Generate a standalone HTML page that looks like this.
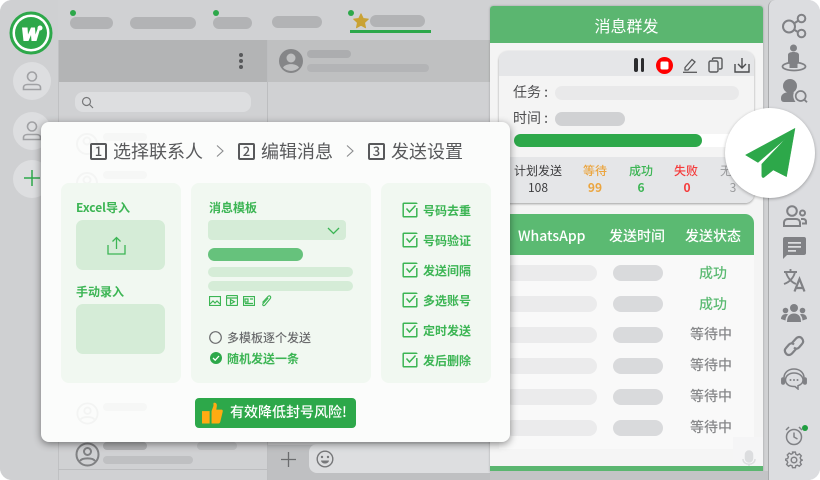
<!DOCTYPE html>
<html lang="zh">
<head>
<meta charset="utf-8">
<style>
html,body{margin:0;padding:0;background:#fff}
#p{position:relative;width:820px;height:480px;overflow:hidden;background:#d0d1d3;border-radius:12px;font-family:"Noto Sans CJK SC","Liberation Sans",sans-serif}
#p div,#p span,#p svg{position:absolute}
.t{white-space:nowrap;line-height:1}
.pill{border-radius:20px}
.b{font-weight:500}
.g{font-size:12px;color:#3cb554;font-weight:700}
.n{width:13px;height:13px;border:2px solid #58595b;border-radius:2px}
.d{width:17px;text-align:center;font-size:13px;color:#58595b;font-weight:500}
</style>
</head>
<body>
<div id="p">
<!-- left rail -->
<div style="left:0;top:0;width:58px;height:480px;background:#cfd0d2"></div>
<svg style="left:9px;top:11px" width="45" height="45" viewBox="0 0 45 45">
<circle cx="22" cy="22" r="20" fill="#fff" stroke="#2da84a" stroke-width="3"/>
<circle cx="22" cy="22" r="16" fill="#2da84a"/>
<path d="M13 16.500h5.500l.5 7 3-7h4l.5 7 2.500-7h2.500l-4 13.500h-5l-.5-6-2.500 6h-5z" fill="#fff"/>
<circle cx="31" cy="17" r="2.500" fill="#fff"/>
</svg>
<div style="left:13px;top:62px;width:38px;height:38px;border-radius:50%;background:#dddee0"></div>
<div style="left:13px;top:112px;width:38px;height:38px;border-radius:50%;background:#dddee0"></div>
<div style="left:13px;top:160px;width:38px;height:38px;border-radius:50%;background:#dddee0"></div>
<svg style="left:22px;top:71px" width="20" height="20" viewBox="0 0 20 20" fill="none" stroke="#a0a1a4" stroke-width="1.600"><circle cx="10" cy="5.500" r="4.500"/><path d="M1.500 18.500v-2c0-2 2-3 4-3h9c2 0 4 1 4 3v2z"/></svg>
<svg style="left:22px;top:121px" width="20" height="20" viewBox="0 0 20 20" fill="none" stroke="#a0a1a4" stroke-width="1.600"><circle cx="10" cy="5.500" r="4.500"/><path d="M1.500 18.500v-2c0-2 2-3 4-3h9c2 0 4 1 4 3v2z"/></svg>
<svg style="left:24px;top:170px" width="16" height="16" viewBox="0 0 16 16" stroke="#2da84a" stroke-width="1.500"><path d="M8 0v16M0 8h16"/></svg>

<!-- tabs -->
<div style="left:70px;top:10px;width:6px;height:6px;border-radius:50%;background:#2da84a"></div>
<div class="pill" style="left:70px;top:17px;width:43px;height:12px;background:#b2b3b5"></div>
<div class="pill" style="left:130px;top:17px;width:66px;height:12px;background:#b2b3b5"></div>
<div style="left:213px;top:10px;width:6px;height:6px;border-radius:50%;background:#2da84a"></div>
<div class="pill" style="left:213px;top:17px;width:39px;height:12px;background:#b2b3b5"></div>
<div class="pill" style="left:272px;top:16px;width:50px;height:12px;background:#b2b3b5"></div>
<div style="left:348px;top:10px;width:6px;height:6px;border-radius:50%;background:#2da84a"></div>
<svg style="left:353px;top:13px" width="16" height="16" viewBox="0 0 16 16"><path d="M8 .8l2.200 4.700 5.100.6-3.800 3.500 1 5.100L8 12.200l-4.500 2.500 1-5.100L.7 6.100l5.100-.6z" fill="#c9a234" stroke="#c9a234" stroke-linejoin="round"/></svg>
<div class="pill" style="left:370px;top:15px;width:55px;height:12px;background:#b2b3b5"></div>
<div style="left:350px;top:30px;width:81px;height:3px;background:#2da84a"></div>

<!-- chat list -->
<div style="left:58px;top:40px;width:210px;height:42px;background:#b3b4b5"></div>
<div style="left:239px;top:53px;width:4px;height:4px;border-radius:50%;background:#58595b"></div>
<div style="left:239px;top:59px;width:4px;height:4px;border-radius:50%;background:#58595b"></div>
<div style="left:239px;top:65px;width:4px;height:4px;border-radius:50%;background:#58595b"></div>
<div style="left:75px;top:92px;width:176px;height:20px;border-radius:8px;background:#dddee0"></div>
<svg style="left:81px;top:96px" width="13" height="13" viewBox="0 0 13 13" fill="none" stroke="#77787a" stroke-width="1.200"><circle cx="5.500" cy="5.500" r="4"/><path d="M8.500 8.500l3.500 3.500"/></svg>
<div style="left:267px;top:40px;width:1px;height:440px;background:#bdbec0"></div>
<div style="left:58px;top:40px;width:1px;height:440px;background:#c0c1c3"></div>
<svg style="left:75px;top:442px" width="25" height="25" viewBox="0 0 25 25" fill="none" stroke="#808183" stroke-width="2"><circle cx="12.500" cy="12.500" r="11"/><circle cx="12.500" cy="9.500" r="3.500"/><path d="M5 19c2-3.500 13-3.500 15 0"/></svg>
<div class="pill" style="left:103px;top:442px;width:44px;height:8px;background:#aeafb1"></div>
<div class="pill" style="left:197px;top:442px;width:40px;height:8px;background:#bfc0c2"></div>
<div class="pill" style="left:103px;top:456px;width:90px;height:8px;background:#bfc0c2"></div>
<div style="left:58px;top:469px;width:210px;height:1px;background:#bdbec0"></div>

<!-- chat area -->
<div style="left:268px;top:40px;width:222px;height:42px;background:#bfc0c1"></div>
<svg style="left:279px;top:49px" width="24" height="24" viewBox="0 0 24 24"><circle cx="12" cy="12" r="12" fill="#858688"/><circle cx="12" cy="9" r="4.500" fill="#bfc0c1"/><path d="M4 18.500c2.500-4.500 13.500-4.500 16 0-4 4.500-12 4.500-16 0z" fill="#bfc0c1"/></svg>
<div class="pill" style="left:307px;top:50px;width:44px;height:8px;background:#acadaf"></div>
<div class="pill" style="left:307px;top:64px;width:122px;height:8px;background:#b3b4b6"></div>
<div style="left:268px;top:445px;width:222px;height:35px;background:#bfc0c2"></div>
<svg style="left:281px;top:452px" width="15" height="15" viewBox="0 0 15 15" stroke="#6b6c6e" stroke-width="1.300"><path d="M7.500 0v15M0 7.500h15"/></svg>
<div style="left:309px;top:444px;width:190px;height:29px;border-radius:8px;background:#dddee0"></div>
<svg style="left:316px;top:450px" width="18" height="18" viewBox="0 0 18 18" fill="none" stroke="#77787a" stroke-width="1.400"><circle cx="9" cy="9" r="7.800"/><circle cx="6" cy="7" r="1.200" fill="#77787a" stroke="none"/><circle cx="12" cy="7" r="1.200" fill="#77787a" stroke="none"/><path d="M5 10.500h8c-.5 4-7.500 4-8 0z" fill="#77787a" stroke="none"/></svg>

<!-- mass send panel -->
<div style="left:490px;top:6px;width:273px;height:466px;background:#f4f4f4;box-shadow:0 0 2px rgba(0,0,0,.25);border-radius:3px 3px 0 0"></div>
<div style="left:490px;top:6px;width:273px;height:37px;background:#5bb670;border-radius:3px 3px 0 0"></div>
<div class="t" style="left:490px;top:17px;width:273px;text-align:center;color:#fff;font-size:16px">消息群发</div>

<div style="left:499px;top:51px;width:255px;height:152px;background:#f4f4f4;border-radius:9px;box-shadow:0 1px 2px rgba(0,0,0,.35);overflow:hidden"></div>
<div style="left:499px;top:51px;width:255px;height:25px;background:#e5e6e8;border-radius:9px 9px 0 0"></div>
<div style="left:634px;top:58px;width:3.500px;height:14px;border-radius:2px;background:#2c2c2e"></div>
<div style="left:640.500px;top:58px;width:3.500px;height:14px;border-radius:2px;background:#2c2c2e"></div>
<svg style="left:656px;top:57px" width="17" height="17" viewBox="0 0 17 17"><circle cx="8.500" cy="8.500" r="8.500" fill="#ff0000"/><rect x="4.500" y="4.500" width="8" height="8" rx="1.500" fill="#fff"/></svg>
<svg style="left:682px;top:57px" width="16" height="16" viewBox="0 0 16 16" fill="none" stroke="#58595b" stroke-width="1.300"><path d="M3 10.500L10 2.500l3 2.500-7 8H3z"/><path d="M1 15.300h14"/></svg>
<svg style="left:708px;top:57px" width="15" height="16" viewBox="0 0 15 16" fill="none" stroke="#58595b" stroke-width="1.400"><rect x="1" y="4" width="9" height="11" rx="1.500"/><path d="M4.500 3V2.200C4.500 1.500 5 1 5.700 1h6.800c.8 0 1.500.7 1.500 1.500v8c0 .8-.5 1.500-1.500 1.500H11"/></svg>
<svg style="left:734px;top:57px" width="16" height="16" viewBox="0 0 16 16" fill="none" stroke="#4b4c4e" stroke-width="1.400"><path d="M8 1v10M4 7l4 4 4-4"/><path d="M1 7v8h14V7"/></svg>

<div class="t" style="left:513px;top:85px;font-size:14px;color:#4d4d4f">任务 :</div>
<div class="pill" style="left:555px;top:86px;width:184px;height:14px;background:#e9e9ea"></div>
<div class="t" style="left:513px;top:111px;font-size:14px;color:#4d4d4f">时间 :</div>
<div class="pill" style="left:555px;top:112px;width:70px;height:14px;background:#d0d1d3"></div>
<div class="pill" style="left:514px;top:134px;width:225px;height:13px;background:#fff"></div>
<div class="pill" style="left:514px;top:134px;width:188px;height:13px;background:#2da84a"></div>

<div style="left:499px;top:157px;width:255px;height:46px;background:#e5e6e8;border-radius:0 0 9px 9px"></div>
<div class="t" style="left:514px;top:165px;font-size:12px;color:#3c3c3e">计划发送</div>
<div class="t" style="left:514px;top:182px;width:48px;text-align:center;font-size:12px;color:#3c3c3e">108</div>
<div class="t b" style="left:583px;top:165px;font-size:12px;color:#eba53f">等待</div>
<div class="t" style="left:583px;top:182px;width:24px;text-align:center;font-size:12px;font-weight:700;color:#eba53f">99</div>
<div class="t b" style="left:629px;top:165px;font-size:12px;color:#3cb554">成功</div>
<div class="t" style="left:629px;top:182px;width:24px;text-align:center;font-size:12px;font-weight:700;color:#3cb554">6</div>
<div class="t b" style="left:674px;top:165px;font-size:12px;color:#f53b3b">失败</div>
<div class="t" style="left:675px;top:182px;width:24px;text-align:center;font-size:12px;font-weight:700;color:#f53b3b">0</div>
<div class="t" style="left:720px;top:165px;font-size:12px;color:#9a9b9d">无</div>
<div class="t" style="left:721px;top:182px;width:24px;text-align:center;font-size:12px;color:#9a9b9d">3</div>

<div style="left:499px;top:214px;width:255px;height:235px;background:#f9f9f9;border-radius:9px 9px 0 0"></div>
<div style="left:499px;top:214px;width:255px;height:41px;background:#5bba72;border-radius:9px 9px 0 0"></div>
<div class="t b" style="left:518px;top:229px;font-size:14px;color:#fff">WhatsApp</div>
<div class="t b" style="left:609px;top:229px;font-size:14px;color:#fff">发送时间</div>
<div class="t b" style="left:685px;top:229px;font-size:14px;color:#fff">发送状态</div>

<div class="pill" style="left:505px;top:265px;width:92px;height:16px;background:#ebebec"></div>
<div class="pill" style="left:613px;top:265px;width:50px;height:16px;background:#d9dadc"></div>
<div class="t b" style="left:699px;top:266px;font-size:14px;color:#5bba72">成功</div>
<div class="pill" style="left:505px;top:296px;width:92px;height:16px;background:#ebebec"></div>
<div class="pill" style="left:613px;top:296px;width:50px;height:16px;background:#d9dadc"></div>
<div class="t b" style="left:699px;top:297px;font-size:14px;color:#5bba72">成功</div>
<div class="pill" style="left:505px;top:327px;width:92px;height:16px;background:#ebebec"></div>
<div class="pill" style="left:613px;top:327px;width:50px;height:16px;background:#d9dadc"></div>
<div class="t b" style="left:690px;top:327px;font-size:14px;color:#87888a">等待中</div>
<div class="pill" style="left:505px;top:358px;width:92px;height:16px;background:#ebebec"></div>
<div class="pill" style="left:613px;top:358px;width:50px;height:16px;background:#d9dadc"></div>
<div class="t b" style="left:690px;top:358px;font-size:14px;color:#87888a">等待中</div>
<div class="pill" style="left:505px;top:389px;width:92px;height:16px;background:#ebebec"></div>
<div class="pill" style="left:613px;top:389px;width:50px;height:16px;background:#d9dadc"></div>
<div class="t b" style="left:690px;top:389px;font-size:14px;color:#87888a">等待中</div>
<div class="pill" style="left:505px;top:420px;width:92px;height:16px;background:#ebebec"></div>
<div class="pill" style="left:613px;top:420px;width:50px;height:16px;background:#d9dadc"></div>
<div class="t b" style="left:690px;top:420px;font-size:14px;color:#87888a">等待中</div>

<div style="left:490px;top:449px;width:273px;height:17px;background:#f5f5f5"></div>
<div style="left:733px;top:437px;width:30px;height:29px;background:#f5f5f6"></div>
<svg style="left:741px;top:450px" width="16" height="20" viewBox="0 0 16 20" fill="none" stroke="#dcdddf" stroke-width="1.500"><rect x="4.500" y="1" width="7" height="11" rx="3.500" fill="#dcdddf"/><path d="M2 9c0 7 12 7 12 0M8 14v5"/></svg>
<div style="left:490px;top:466px;width:273px;height:5px;background:#5bb670"></div>
<div style="left:490px;top:471px;width:279px;height:9px;background:#c3c4c6"></div>

<!-- right rail -->
<div style="left:768px;top:0;width:52px;height:480px;background:#dcdde0;border-left:1px solid #a9aaac;border-radius:7px 0 0 0;box-sizing:border-box"></div>
<svg style="left:781px;top:13px" width="26" height="26" viewBox="0 0 26 26" fill="none" stroke="#808185" stroke-width="2"><circle cx="8" cy="13.500" r="6"/><circle cx="20.500" cy="5.500" r="3.800"/><circle cx="20.500" cy="20.500" r="3.800"/><path d="M13 10.500l4.500-3M13 16.500l4.500 3"/></svg>
<svg style="left:781px;top:44px" width="26" height="28" viewBox="0 0 26 28"><circle cx="12.500" cy="4" r="3.500" fill="#808185"/><path d="M7 11c0-2 2-3 5.500-3s5.500 1 5.500 3v8l-1.500 1v4h-8v-4L7 19z" fill="#808185"/><ellipse cx="13" cy="22.500" rx="11.500" ry="4" fill="none" stroke="#808185" stroke-width="1.800"/></svg>
<svg style="left:781px;top:78px" width="28" height="26" viewBox="0 0 28 26"><circle cx="9" cy="8" r="7" fill="#808185"/><path d="M0 20c0-4 4-6 9-6 2 0 3 .2 4 .5-1.500 3-.5 6.500 1.500 9.500H3c-2 0-3-1.500-3-3z" fill="#808185"/><circle cx="19.700" cy="18" r="5" fill="none" stroke="#808185" stroke-width="1.700"/><path d="M23.300 21.600l2.700 2.700" stroke="#808185" stroke-width="1.800"/></svg>
<svg style="left:783px;top:205px" width="24" height="22" viewBox="0 0 24 22" fill="none" stroke="#808185" stroke-width="2"><circle cx="9" cy="6" r="4.800"/><circle cx="19.500" cy="8" r="2.500"/><path d="M1 21v-3c0-3 2-4 4-4h8c2 0 4 1 4 4v3z"/><path d="M18 14h2c2 0 3 1 3 3v1.500h-4"/></svg>
<svg style="left:783px;top:237px" width="23" height="22" viewBox="0 0 23 22"><path d="M2 0h19c1.200 0 2 .8 2 2v14c0 1.200-.8 2-2 2H4l-4 4V2C0 .8.800 0 2 0z" fill="#808185"/><path d="M5 5h13v1.800H5zM5 9h13v1.800H5zM5 13h8v1.800H5z" fill="#dcdde0"/></svg>
<svg style="left:783px;top:269px" width="23" height="23" viewBox="0 0 23 23" fill="none" stroke="#808185" stroke-width="1.900"><path d="M1 3h13M7.500 0v3M3 3c1 5 5 10 10 12M12 3c-1 5-5 10-11 12"/><path d="M11.500 22.500L16.500 10l5 12.500M13 19h7" stroke-width="2.200"/></svg>
<svg style="left:781px;top:304px" width="26" height="18" viewBox="0 0 26 18" fill="#808185"><circle cx="13" cy="4" r="4"/><circle cx="4.500" cy="6.500" r="2.800"/><circle cx="21.500" cy="6.500" r="2.800"/><path d="M6 18c0-6 3-8.500 7-8.500s7 2.500 7 8.500z"/><path d="M0 15c0-3 2-5 5-5 1 0 1.500.2 2 .5-1.500 1.500-2.500 3.500-2.500 6zM26 15c0-3-2-5-5-5-1 0-1.500.2-2 .5 1.500 1.500 2.500 3.500 2.500 6z"/></svg>
<svg style="left:783px;top:335px" width="22" height="22" viewBox="0 0 22 22" fill="none" stroke="#808185" stroke-width="2.200"><path d="M9 8l4-4.500c2-2 4.500-2 6 0s1.500 4 0 5.500l-3 3.500c-1.500 1.500-3.500 1.500-5 0"/><path d="M13 14l-4 4.500c-2 2-4.500 2-6 0s-1.500-4 0-5.500l3-3.500c1.500-1.500 3.500-1.500 5 0"/></svg>
<svg style="left:781px;top:368px" width="26" height="22" viewBox="0 0 26 22" fill="none" stroke="#808185" stroke-width="1.500"><path d="M3 12V10C3 4 8 1 13 1s10 3 10 9v2"/><path d="M13 5c-5 0-8.500 3-8.500 7s3.500 6.500 8.500 6.500h1l3 2.500v-3.300c3-1 5-3 5-5.700 0-4-4-7-9-7z"/><rect x="0.800" y="10" width="2.500" height="6" rx="1.200" fill="#808185"/><rect x="22.700" y="10" width="2.500" height="6" rx="1.200" fill="#808185"/><circle cx="9.500" cy="12" r="1" fill="#808185" stroke="none"/><circle cx="13" cy="12" r="1" fill="#808185" stroke="none"/><circle cx="16.500" cy="12" r="1" fill="#808185" stroke="none"/></svg>
<svg style="left:785px;top:426px" width="18" height="20" viewBox="0 0 18 20" fill="none" stroke="#808185" stroke-width="1.500"><circle cx="9" cy="11" r="7.500"/><path d="M9 6.500V11l3.500 2M1 4l3-3M17 4l-3-3"/></svg>
<div style="left:802px;top:425px;width:6px;height:6px;border-radius:50%;background:#1f9d40"></div>
<svg style="left:785px;top:451px" width="18" height="18" viewBox="0 0 18 18" fill="none" stroke="#808185" stroke-width="1.500"><circle cx="9" cy="9" r="2.800"/><path d="M7.500 1h3l.5 2.300 1.800.8 2-1.200 2 2.100-1.200 2 .7 1.700L18 9.500v0l-1.700.7-.7 1.800 1.200 2-2.100 2-2-1.200-1.800.7-.4 2h-3l-.5-2-1.800-.7-2 1.200-2-2 1.200-2-.8-1.800L0 9.500v-1l2.300-.7.800-1.800-1.200-2 2-2 2 1.200 1.800-.8z" transform="translate(.5 .2) scale(.94)"/></svg>

<!-- send bubble -->
<div style="left:725px;top:108px;width:90px;height:90px;border-radius:50%;background:#fff;box-shadow:0 1px 3px rgba(0,0,0,.3)"></div>
<svg style="left:725px;top:108px" width="90" height="90" viewBox="725 108 90 90"><path d="M795 128.300L745.500 155 758 162.500 786 138.300 761.800 164v11.500c0 2 1.200 2.800 2.700 1.500l8.800-7 13.200 6.700z" fill="#2da84a" stroke="#2da84a" stroke-width=".5" stroke-linejoin="round"/></svg>

<!-- modal -->
<div style="left:41px;top:122px;width:469px;height:320px;background:#fbfcfb;border-radius:8px;box-shadow:0 2px 8px rgba(0,0,0,.45)"></div>
<svg style="left:76px;top:133px" width="22" height="22" viewBox="0 0 22 22" fill="none" stroke="#f4f5f4" stroke-width="2"><circle cx="11" cy="11" r="10"/><circle cx="11" cy="8" r="3.500"/></svg>
<svg style="left:76px;top:172px" width="22" height="22" viewBox="0 0 22 22" fill="none" stroke="#f4f5f4" stroke-width="2"><circle cx="11" cy="11" r="10"/><circle cx="11" cy="8" r="3.500"/></svg>
<div class="pill" style="left:103px;top:133px;width:44px;height:8px;background:#f6f7f6"></div>
<div class="pill" style="left:103px;top:171px;width:44px;height:8px;background:#f6f7f6"></div>
<svg style="left:76px;top:402px" width="23" height="23" viewBox="0 0 25 25" fill="none" stroke="#f3f4f3" stroke-width="2"><circle cx="12.500" cy="12.500" r="11"/><circle cx="12.500" cy="9.500" r="3.500"/><path d="M5 19c2-3.500 13-3.500 15 0"/></svg>
<div class="pill" style="left:103px;top:403px;width:44px;height:8px;background:#f6f7f6"></div>

<!-- steps -->
<div class="n" style="left:90px;top:143px"></div>
<div class="t d" style="left:90px;top:144px">1</div>
<div class="t" style="left:113px;top:142px;font-size:18px;color:#58595b">选择联系人</div>
<svg style="left:216px;top:145px" width="8" height="12" viewBox="0 0 8 12" fill="none" stroke="#8a8b8d" stroke-width="1.100"><path d="M1 .5L7 6 1 11.500"/></svg>
<div class="n" style="left:238px;top:143px"></div>
<div class="t d" style="left:238px;top:144px">2</div>
<div class="t" style="left:261px;top:142px;font-size:18px;color:#58595b">编辑消息</div>
<svg style="left:346px;top:145px" width="8" height="12" viewBox="0 0 8 12" fill="none" stroke="#8a8b8d" stroke-width="1.100"><path d="M1 .5L7 6 1 11.500"/></svg>
<div class="n" style="left:368px;top:143px"></div>
<div class="t d" style="left:368px;top:144px">3</div>
<div class="t" style="left:391px;top:142px;font-size:18px;color:#58595b">发送设置</div>

<!-- card 1 -->
<div style="left:61px;top:183px;width:120px;height:200px;background:#f1f8f1;border-radius:8px"></div>
<div class="t g" style="left:76px;top:202px">Excel导入</div>
<div style="left:76px;top:220px;width:89px;height:50px;border-radius:7px;background:#d5ecd7"></div>
<svg style="left:107px;top:236px" width="19" height="19" viewBox="0 0 19 19" fill="none" stroke="#3cb554" stroke-width="1.300"><path d="M9.500 13V1.500M5.500 5.500l4-4 4 4"/><path d="M1 9v9h17V9"/></svg>
<div class="t g" style="left:76px;top:286px">手动录入</div>
<div style="left:76px;top:304px;width:89px;height:50px;border-radius:7px;background:#d5ecd7"></div>

<!-- card 2 -->
<div style="left:191px;top:183px;width:180px;height:200px;background:#f1f8f1;border-radius:8px"></div>
<div class="t g" style="left:209px;top:202px">消息模板</div>
<div style="left:208px;top:220px;width:138px;height:20px;border-radius:4px;background:#d5ecd7"></div>
<svg style="left:327px;top:227px" width="13" height="8" viewBox="0 0 13 8" fill="none" stroke="#3cb554" stroke-width="1.300"><path d="M1 1l5.500 5.500L12 1"/></svg>
<div class="pill" style="left:208px;top:248px;width:95px;height:13px;background:#66c27c"></div>
<div class="pill" style="left:208px;top:267px;width:145px;height:10px;background:#d5ecd7"></div>
<div class="pill" style="left:208px;top:281px;width:145px;height:10px;background:#d5ecd7"></div>
<svg style="left:209px;top:296px" width="12" height="10" viewBox="0 0 12 10" fill="none" stroke="#3cb554" stroke-width="1.200"><rect x=".5" y=".5" width="11" height="9"/><path d="M1 8l3-3 2 2 2-2 3 3"/></svg>
<svg style="left:226px;top:295px" width="12" height="11" viewBox="0 0 12 11" fill="none" stroke="#3cb554" stroke-width="1.200"><rect x=".5" y=".5" width="11" height="10" rx="1"/><path d="M.5 3h11M4.500 4.500v4.500l4-2.200z"/></svg>
<svg style="left:243px;top:296px" width="12" height="10" viewBox="0 0 12 10" fill="none" stroke="#3cb554" stroke-width="1.200"><rect x=".5" y=".5" width="11" height="9"/><path d="M2 3h3v3H2zM7 3h3M2 7.500h8"/></svg>
<svg style="left:261px;top:295px" width="11" height="12" viewBox="0 0 11 12" fill="none" stroke="#3cb554" stroke-width="1.100"><path d="M1.500 7.500l5.500-6c1.500-1.500 3.500 0 2.300 2L4 10c-1.500 1.500-3 0-1.800-1.500l5-5.500"/></svg>
<svg style="left:209px;top:331px" width="13" height="13" viewBox="0 0 13 13" fill="none" stroke="#6b6c6e" stroke-width="1.200"><circle cx="6.500" cy="6.500" r="5.800"/></svg>
<div class="t b" style="left:227px;top:332px;font-size:12px;color:#6b6c6e">多模板逐个发送</div>
<svg style="left:210px;top:352px" width="12" height="12" viewBox="0 0 12 12"><circle cx="6" cy="6" r="6" fill="#2da84a"/><path d="M3 6l2.200 2.200L9 4" fill="none" stroke="#fff" stroke-width="1.300"/></svg>
<div class="t g" style="left:227px;top:353px">随机发送一条</div>

<!-- card 3 -->
<div style="left:381px;top:183px;width:110px;height:200px;background:#f1f8f1;border-radius:8px"></div>
<svg style="left:402px;top:202px" width="16" height="16" viewBox="0 0 16 16" fill="none" stroke="#3cb554" stroke-width="1.500"><path d="M14.800 6v8c0 .5-.3.800-.8.800H2c-.5 0-.8-.3-.8-.8V2c0-.5.3-.8.800-.8h12c.5 0 .8.300.8.800"/><path d="M4.500 6.500l3 3.500L13.500 3.500"/></svg>
<div class="t g" style="left:423px;top:205px">号码去重</div>
<svg style="left:402px;top:232px" width="16" height="16" viewBox="0 0 16 16" fill="none" stroke="#3cb554" stroke-width="1.500"><path d="M14.800 6v8c0 .5-.3.800-.8.800H2c-.5 0-.8-.3-.8-.8V2c0-.5.3-.8.800-.8h12c.5 0 .8.300.8.800"/><path d="M4.500 6.500l3 3.500L13.500 3.500"/></svg>
<div class="t g" style="left:423px;top:235px">号码验证</div>
<svg style="left:402px;top:262px" width="16" height="16" viewBox="0 0 16 16" fill="none" stroke="#3cb554" stroke-width="1.500"><path d="M14.800 6v8c0 .5-.3.800-.8.800H2c-.5 0-.8-.3-.8-.8V2c0-.5.3-.8.800-.8h12c.5 0 .8.300.8.800"/><path d="M4.500 6.500l3 3.500L13.500 3.500"/></svg>
<div class="t g" style="left:423px;top:265px">发送间隔</div>
<svg style="left:402px;top:292px" width="16" height="16" viewBox="0 0 16 16" fill="none" stroke="#3cb554" stroke-width="1.500"><path d="M14.800 6v8c0 .5-.3.800-.8.800H2c-.5 0-.8-.3-.8-.8V2c0-.5.3-.8.800-.8h12c.5 0 .8.300.8.800"/><path d="M4.500 6.500l3 3.500L13.500 3.500"/></svg>
<div class="t g" style="left:423px;top:295px">多选账号</div>
<svg style="left:402px;top:322px" width="16" height="16" viewBox="0 0 16 16" fill="none" stroke="#3cb554" stroke-width="1.500"><path d="M14.800 6v8c0 .5-.3.800-.8.800H2c-.5 0-.8-.3-.8-.8V2c0-.5.3-.8.800-.8h12c.5 0 .8.300.8.800"/><path d="M4.500 6.500l3 3.500L13.500 3.500"/></svg>
<div class="t g" style="left:423px;top:325px">定时发送</div>
<svg style="left:402px;top:352px" width="16" height="16" viewBox="0 0 16 16" fill="none" stroke="#3cb554" stroke-width="1.500"><path d="M14.800 6v8c0 .5-.3.800-.8.800H2c-.5 0-.8-.3-.8-.8V2c0-.5.3-.8.800-.8h12c.5 0 .8.300.8.800"/><path d="M4.500 6.500l3 3.500L13.500 3.500"/></svg>
<div class="t g" style="left:423px;top:355px">发后删除</div>

<!-- badge -->
<div style="left:195px;top:398px;width:161px;height:30px;border-radius:4px;background:#2da84a"></div>
<svg style="left:202px;top:402px" width="21" height="22" viewBox="0 0 22 23" fill="#ffab12"><rect x="0" y="9.500" width="8" height="13"/><path d="M10 9.500L12 4V1c2-.8 4 .5 3.500 3.500L15 8h5.500c1 0 1.500 1 1.200 2l-2.500 10.500c-.4 1.500-1.200 2-2.500 2H10z"/></svg>
<div class="t b" style="left:230px;top:405px;font-size:14px;color:#fff">有效降低封号风险!</div>
</div>
</body>
</html>
